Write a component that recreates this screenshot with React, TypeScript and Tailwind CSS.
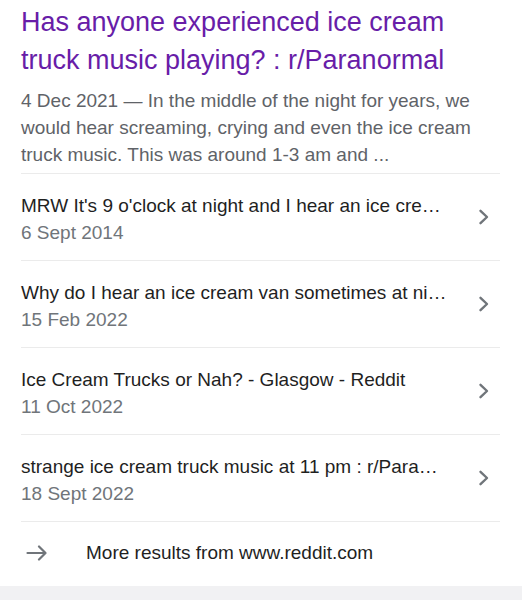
import React from 'react';

type Result = {
  title: string;
  date: string;
};

const results: Result[] = [
  { title: "MRW It's 9 o'clock at night and I hear an ice cre…", date: '6 Sept 2014' },
  { title: 'Why do I hear an ice cream van sometimes at ni…', date: '15 Feb 2022' },
  { title: 'Ice Cream Trucks or Nah? - Glasgow - Reddit', date: '11 Oct 2022' },
  { title: 'strange ice cream truck music at 11 pm : r/Para…', date: '18 Sept 2022' },
];

function Chevron() {
  return (
    <svg width="12" height="16" viewBox="0 0 12 16" fill="none" className="shrink-0">
      <path d="M2.5 1.8L9 8l-6.5 6.2" stroke="#70757a" strokeWidth="2.4" strokeLinecap="round" strokeLinejoin="round" />
    </svg>
  );
}

function ArrowRight() {
  return (
    <svg width="22" height="16" viewBox="0 0 22 16" fill="none">
      <path d="M1.5 8h18M13 1.5L19.5 8 13 14.5" stroke="#70757a" strokeWidth="2.2" strokeLinecap="round" strokeLinejoin="round" />
    </svg>
  );
}

function App() {
  return (
    <div className="w-[522px] h-[600px] bg-white flex flex-col font-['Liberation_Sans',Arial,sans-serif]">
      <div className="pl-[21px] pr-[22px]">
        <h2 className="pt-[3px] text-[27px] leading-[38px] text-[#681da8]">
          Has anyone experienced ice cream truck music playing? : r/Paranormal
        </h2>
        <p className="mt-2 pb-[5px] text-[19px] leading-[27px] text-[#5f6368]">
          4 Dec 2021 — In the middle of the night for years, we would hear screaming, crying and even the ice cream truck music. This was around 1-3 am and ...
        </p>

        {results.map((r) => (
          <div key={r.title} className="border-t border-[#ebebeb] pt-[18px] pb-[14px] flex items-center">
            <div className="flex-1 min-w-0 text-[19px] leading-[27px]">
              <div className="text-[#1f1f1f] whitespace-nowrap">{r.title}</div>
              <div className="text-[#70757a]">{r.date}</div>
            </div>
            <div className="pr-[10px] -mt-1">
              <Chevron />
            </div>
          </div>
        ))}

        <div className="border-t border-[#ebebeb] pt-[17px] pb-5 flex items-center">
          <div className="w-[65px] pl-[5px] flex items-center">
            <ArrowRight />
          </div>
          <span className="text-[19px] leading-[27px] text-[#1f1f1f]">More results from www.reddit.com</span>
        </div>
      </div>
      <div className="flex-1 bg-[#f1f1f3]" />
    </div>
  );
}

export default App;
